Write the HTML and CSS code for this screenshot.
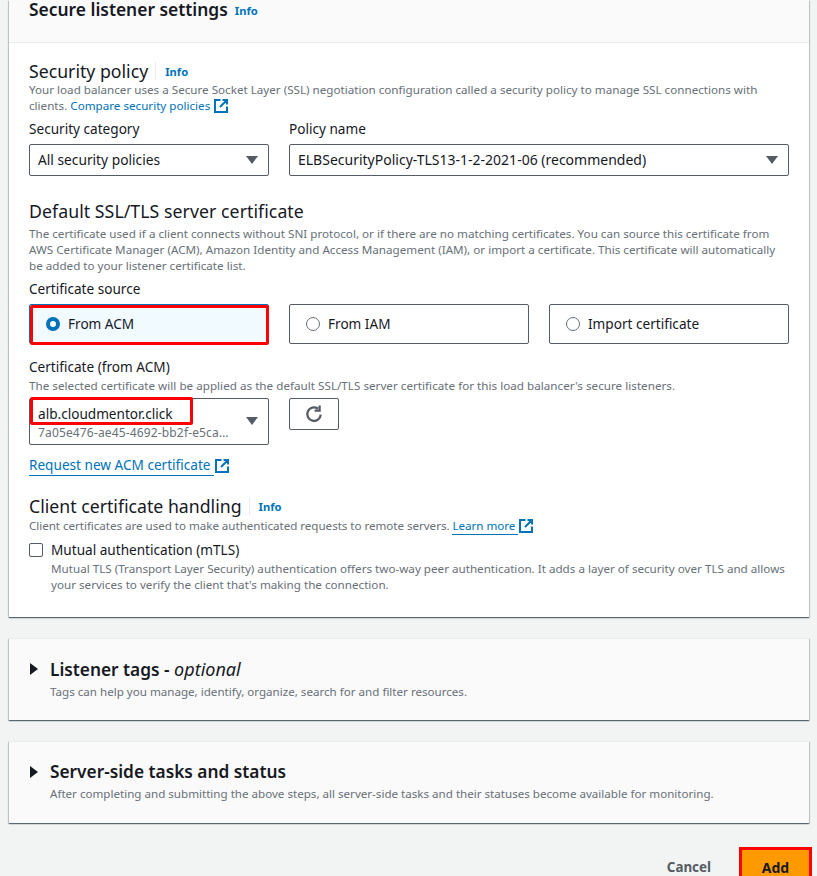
FILE: index.html
```html
<!DOCTYPE html>
<html lang="en">

<head>
    <meta charset="UTF-8">
    <meta name="viewport" content="width=device-width, initial-scale=1.0">
    <title>Add listener</title>
    <link rel="stylesheet" href="styles.css">
</head>

<body>

    <section class="card">
        <header class="card-header">
            <h2>Secure listener settings</h2>
            <a class="info" href="#">Info</a>
        </header>

        <div class="card-body">
            <div class="title-row">
                <h3>Security policy</h3>
                <span class="divider"></span>
                <a class="info" href="#">Info</a>
            </div>
            <p class="desc">Your load balancer uses a Secure Socket Layer (SSL) negotiation configuration called a security policy to manage SSL connections with clients. <a class="link" href="#">Compare security policies <svg class="ext" viewBox="0 0 14 14"><path d="M6.500 1H1v12h12V7.500M8.500 1H13v4.500M13 1 6 8"/></svg></a></p>

            <div class="policy-row">
                <div>
                    <label>Security category</label>
                    <div class="select">
                        <span class="select-short">All security policies</span>
                        <i class="caret"></i>
                    </div>
                </div>
                <div>
                    <label>Policy name</label>
                    <div class="select">
                        <span>ELBSecurityPolicy-TLS13-1-2-2021-06 (recommended)</span>
                        <i class="caret"></i>
                    </div>
                </div>
            </div>

            <h3 class="cert-title">Default SSL/TLS server certificate</h3>
            <p class="desc">The certificate used if a client connects without SNI protocol, or if there are no matching certificates. You can source this certificate from AWS Certificate Manager (ACM), Amazon Identity and Access Management (IAM), or import a certificate. This certificate will automatically be added to your listener certificate list.</p>

            <label class="source-label">Certificate source</label>
            <div class="tiles">
                <div class="tile selected">
                    <span class="radio checked"></span>From ACM
                    <span class="mark"></span>
                </div>
                <div class="tile"><span class="radio"></span>From IAM</div>
                <div class="tile"><span class="radio"></span>Import certificate</div>
            </div>

            <label class="cert-label">Certificate (from ACM)</label>
            <p class="desc desc-selected">The selected certificate will be applied as the default SSL/TLS server certificate for this load balancer's secure listeners.</p>
            <div class="cert-row">
                <div class="select select-tall">
                    <div class="select-text">
                        <span>alb.cloudmentor.click</span>
                        <small>7a05e476-ae45-4692-bb2f-e5ca…</small>
                    </div>
                    <i class="caret"></i>
                    <span class="mark mark-name"></span>
                </div>
                <button class="refresh">
                    <svg viewBox="0 0 16 16"><path d="M14 8.500A6 6 0 1 1 11.500 3.200M13 .5v4.500H8.500"/></svg>
                </button>
            </div>
            <a class="link request" href="#"><span class="underlined">Request new ACM certificate </span><svg class="ext" viewBox="0 0 14 14"><path d="M6.500 1H1v12h12V7.500M8.500 1H13v4.500M13 1 6 8"/></svg></a>

            <div class="title-row client-title">
                <h3>Client certificate handling</h3>
                <span class="divider"></span>
                <a class="info" href="#">Info</a>
            </div>
            <p class="desc desc-client">Client certificates are used to make authenticated requests to remote servers. <a class="link" href="#"><span class="underlined">Learn more </span><svg class="ext" viewBox="0 0 14 14"><path d="M6.500 1H1v12h12V7.500M8.500 1H13v4.500M13 1 6 8"/></svg></a></p>
            <div class="check-row">
                <span class="checkbox"></span>
                <div>
                    <div class="check-label">Mutual authentication (mTLS)</div>
                    <p class="desc">Mutual TLS (Transport Layer Security) authentication offers two-way peer authentication. It adds a layer of security over TLS and allows your services to verify the client that's making the connection.</p>
                </div>
            </div>
        </div>
    </section>

    <section class="card expand">
        <i class="arrow"></i>
        <div>
            <h2>Listener tags - <em>optional</em></h2>
            <p class="desc">Tags can help you manage, identify, organize, search for and filter resources.</p>
        </div>
    </section>

    <section class="card expand">
        <i class="arrow"></i>
        <div>
            <h2>Server-side tasks and status</h2>
            <p class="desc">After completing and submitting the above steps, all server-side tasks and their statuses become available for monitoring.</p>
        </div>
    </section>

    <footer class="actions">
        <button class="btn-cancel">Cancel</button>
        <button class="btn-add">Add</button>
    </footer>

</body>

</html>
```

FILE: styles.css
```css
html, body {
    margin: 0;
    padding: 0;
    height: 876px;
    overflow: hidden;
}

body {
    background: #f2f3f3;
    color: #16191f;
    font-family: 'Noto Sans', sans-serif;
    font-size: 14px;
    padding: 0 8px 0 9px;
    box-sizing: border-box;
}

h2, h3, p {
    margin: 0;
}

.card {
    background: #fff;
    box-shadow: 0 1px 1px 0 rgba(0, 28, 36, 0.5), 1px 1px 1px 0 rgba(0, 28, 36, 0.15), -1px 1px 1px 0 rgba(0, 28, 36, 0.15);
    margin-bottom: 21px;
}

.card-header {
    background: #fafafa;
    border-bottom: 1px solid #eaeded;
    height: 43px;
    box-sizing: border-box;
    padding: 0 20px;
    display: flex;
    align-items: flex-start;
    gap: 8px;
}

.card-header h2 {
    line-height: 18px;
    font-size: 17.400px;
}

.card-header .info {
    margin-left: -1px;
}

h2 {
    font-size: 17.300px;
    font-weight: 600;
}

h3 {
    font-size: 17.700px;
    font-weight: 400;
    line-height: 22px;
}

.info {
    color: #0073bb;
    font-size: 11.200px;
    font-weight: 700;
    text-decoration: none;
    line-height: 22px;
}

.card-body {
    padding: 17px 20px 24px;
}

.title-row {
    display: flex;
    align-items: center;
    height: 22px;
}

.divider {
    width: 1px;
    height: 18px;
    background: #eaeded;
    margin: 0 9px 0 7px;
}

.title-row .info {
    position: relative;
    top: 1px;
}

.desc {
    color: #687078;
    font-size: 11.650px;
    line-height: 16px;
}

.desc-selected {
    letter-spacing: 0.02px;
}

.desc-client {
    letter-spacing: -0.05px;
}

.link {
    color: #0073bb;
    text-decoration: none;
}

.ext {
    width: 14px;
    height: 14px;
    vertical-align: -3px;
    margin-left: 1px;
    fill: none;
    stroke: #0073bb;
    stroke-width: 2;
}

label {
    display: block;
    font-size: 13.600px;
    line-height: 20px;
    color: #16191f;
}

.policy-row {
    display: grid;
    grid-template-columns: 240px 500px;
    gap: 20px;
    margin-top: 5px;
}

.policy-row label {
    margin-bottom: 5px;
}

.select {
    position: relative;
    border: 1px solid #545b64;
    border-radius: 2px;
    height: 32px;
    box-sizing: border-box;
    padding: 0 8px 1px;
    display: flex;
    align-items: center;
    justify-content: space-between;
    font-size: 14px;
}

.select-short {
    font-size: 13.750px;
}

.caret {
    width: 0;
    height: 0;
    border-left: 6px solid transparent;
    border-right: 6px solid transparent;
    border-top: 8px solid #545b64;
    margin-right: 2px;
}

.cert-title {
    margin-top: 24px;
    margin-bottom: 4px;
    letter-spacing: 0.06px;
}

.source-label {
    margin-top: 5px;
    margin-bottom: 5px;
}

.tiles {
    display: grid;
    grid-template-columns: repeat(3, 240px);
    gap: 20px;
}

.tile {
    position: relative;
    border: 1px solid #545b64;
    border-radius: 2px;
    height: 40px;
    box-sizing: border-box;
    padding: 0 0 1px 16px;
    display: flex;
    align-items: center;
    gap: 8px;
    font-size: 13.600px;
}

.tile.selected {
    border-color: #0073bb;
    background: #f1faff;
}

.radio {
    width: 14px;
    height: 14px;
    box-sizing: border-box;
    border: 1px solid #687078;
    border-radius: 50%;
    background: #fff;
}

.radio.checked {
    border: 4px solid #0073bb;
}

.mark {
    position: absolute;
    left: 0;
    top: 0;
    right: -1px;
    bottom: -2px;
    border: 3px solid #f00;
    border-radius: 2px;
}

.cert-label {
    margin-top: 13px;
}

.cert-label + .desc {
    margin-top: 1px;
}

.cert-row {
    display: flex;
    align-items: flex-start;
    gap: 20px;
    margin-top: 4px;
}

.select-tall {
    width: 240px;
    height: 47px;
    flex: none;
}

.select-text {
    display: flex;
    flex-direction: column;
    align-self: flex-start;
    padding-top: 5px;
    font-size: 13.600px;
}

.select-text span {
    line-height: 20px;
}

.select-text small {
    font-size: 12px;
    line-height: 18px;
    letter-spacing: 0.15px;
    color: #687078;
}

.mark-name {
    left: 0;
    top: -2px;
    right: auto;
    bottom: auto;
    width: 163px;
    height: 28px;
    box-sizing: border-box;
}

.refresh {
    width: 50px;
    height: 32px;
    background: #fff;
    border: 1px solid #545b64;
    border-radius: 2px;
    padding: 0;
    display: flex;
    align-items: center;
    justify-content: center;
}

.refresh svg {
    width: 18px;
    height: 18px;
    fill: none;
    stroke: #545b64;
    stroke-width: 2;
}

.request {
    display: inline-block;
    margin-top: 10px;
    font-size: 13.600px;
    line-height: 20px;
}

.underlined {
    border-bottom: 1px solid #0073bb;
    padding-bottom: 1px;
}

.client-title {
    margin-top: 20px;
}

.client-title + .desc {
    margin-top: 1px;
}

.check-row {
    display: flex;
    gap: 8px;
    margin-top: 6px;
}

.checkbox {
    width: 14px;
    height: 14px;
    box-sizing: border-box;
    margin-top: 3px;
    border: 1px solid #545b64;
    border-radius: 2px;
    flex: none;
}

.check-label {
    font-size: 13.600px;
    line-height: 20px;
}

.check-label + .desc {
    margin-top: 1px;
}

.expand {
    background: #fafafa;
    height: 82px;
    box-sizing: border-box;
    padding: 19px 20px 0 21px;
    display: flex;
    gap: 12px;
    border-top: 1px solid #eaeded;
}

.expand h2 {
    line-height: 22px;
}

.expand h2 em {
    font-size: 18px;
    font-weight: 400;
}

.expand .desc {
    margin-top: 3px;
    font-size: 11.600px;
}

.arrow {
    width: 0;
    height: 0;
    margin-top: 5px;
    border-top: 6px solid transparent;
    border-bottom: 6px solid transparent;
    border-left: 8px solid #16191f;
}

.actions {
    display: flex;
    justify-content: flex-end;
    align-items: flex-start;
    gap: 28px;
    margin-right: -3px;
    margin-top: 24px;
}

.actions button {
    font-family: inherit;
    font-weight: 700;
    border: none;
    background: none;
    padding: 0;
}

.actions .btn-cancel {
    color: #545b64;
    font-size: 13.400px;
    padding-top: 11px;
}

.actions .btn-add {
    background: #ff9900;
    color: #16191f;
    font-size: 14px;
    width: 73px;
    height: 40px;
    padding-top: 1px;
    box-sizing: border-box;
    border: 3px solid #f00;
    text-align: center;
    align-self: flex-start;
}
```
